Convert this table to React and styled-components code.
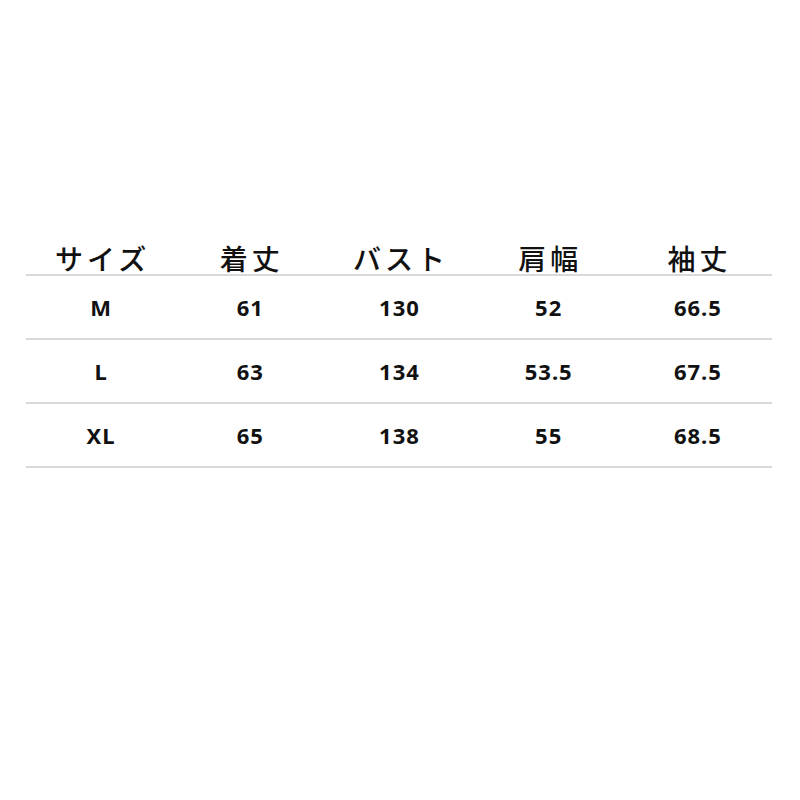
import React from "react";
import styled, { createGlobalStyle } from "styled-components";

const Global = createGlobalStyle`
  html, body { margin: 0; padding: 0; background: #ffffff; }
  body { width: 800px; height: 800px; font-family: "Noto Sans", "Noto Sans CJK JP", sans-serif; }
`;

const Page = styled.div`
  width: 800px;
  height: 800px;
  padding-top: 234px;
  box-sizing: border-box;
  display: flex;
  justify-content: center;
`;

const Table = styled.div`
  width: 746px;
  margin-left: -2px;
  display: flex;
  flex-direction: column;
`;

const Row = styled.div`
  display: grid;
  grid-template-columns: repeat(5, 1fr);
  align-items: center;
  height: ${(p) => (p.$header ? 40 : 62)}px;
  border-bottom: 2px solid #d9d9d9;
`;

const HeadCell = styled.div`
  text-align: center;
  font-family: "Noto Sans CJK JP", "Noto Sans", sans-serif;
  font-size: 28px;
  font-weight: 500;
  letter-spacing: 4px;
  padding-left: 4px;
  color: #111;
  line-height: 1;
  padding-top: 8px;
`;

const Cell = styled.div`
  text-align: center;
  font-family: "Noto Sans", "Open Sans", sans-serif;
  font-size: 22px;
  font-weight: 700;
  letter-spacing: 1px;
  padding-left: 1px;
  color: #111;
  line-height: 1;
`;

const headers = ["サイズ", "着丈", "バスト", "肩幅", "袖丈"];
const rows = [
  ["M", "61", "130", "52", "66.5"],
  ["L", "63", "134", "53.5", "67.5"],
  ["XL", "65", "138", "55", "68.5"],
];

export default function App() {
  return (
    <>
      <Global />
      <Page>
        <Table>
          <Row $header>
            {headers.map((h) => (
              <HeadCell key={h}>{h}</HeadCell>
            ))}
          </Row>
          {rows.map((r) => (
            <Row key={r[0]}>
              {r.map((c, i) => (
                <Cell key={i}>{c}</Cell>
              ))}
            </Row>
          ))}
        </Table>
      </Page>
    </>
  );
}
